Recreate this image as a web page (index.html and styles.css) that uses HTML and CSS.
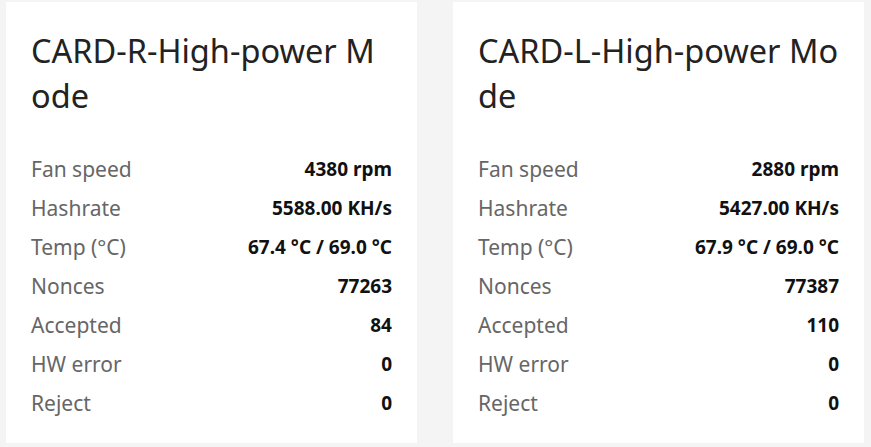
FILE: index.html
```html
<!DOCTYPE html>
<html lang="en">
<head>
    <meta charset="UTF-8">
    <title>Cards</title>
    <link rel="stylesheet" href="styles.css">
</head>
<body>
    <div class="card-row">
        <!-- Card R -->
        <div class="card">
            <div class="card-title">CARD-R-High-power Mode</div>
            <div class="stat"><span class="label">Fan speed</span><span class="value">4380 rpm</span></div>
            <div class="stat"><span class="label">Hashrate</span><span class="value">5588.00 KH/s</span></div>
            <div class="stat"><span class="label">Temp (°C)</span><span class="value">67.4 °C / 69.0 °C</span></div>
            <div class="stat"><span class="label">Nonces</span><span class="value">77263</span></div>
            <div class="stat"><span class="label">Accepted</span><span class="value">84</span></div>
            <div class="stat"><span class="label">HW error</span><span class="value">0</span></div>
            <div class="stat"><span class="label">Reject</span><span class="value">0</span></div>
        </div>

        <!-- Card L -->
        <div class="card">
            <div class="card-title">CARD-L-High-power Mode</div>
            <div class="stat"><span class="label">Fan speed</span><span class="value">2880 rpm</span></div>
            <div class="stat"><span class="label">Hashrate</span><span class="value">5427.00 KH/s</span></div>
            <div class="stat"><span class="label">Temp (°C)</span><span class="value">67.9 °C / 69.0 °C</span></div>
            <div class="stat"><span class="label">Nonces</span><span class="value">77387</span></div>
            <div class="stat"><span class="label">Accepted</span><span class="value">110</span></div>
            <div class="stat"><span class="label">HW error</span><span class="value">0</span></div>
            <div class="stat"><span class="label">Reject</span><span class="value">0</span></div>
        </div>
    </div>
</body>
</html>
```

FILE: styles.css
```css
body {
    margin: 0;
    background-color: #f4f4f4;
    font-family: "Noto Sans", "Open Sans", sans-serif;
    color: #222;
}

.card-row {
    display: flex;
    gap: 36px;
    padding: 2px 0 0 6px;
}

.card {
    width: 411px;
    height: 441px;
    box-sizing: border-box;
    background-color: #fff;
    padding: 26px 25px 0 25px;
}

/* Title breaks mid-word like the original */
.card-title {
    font-size: 32.5px;
    line-height: 45px;
    color: #222;
    word-break: break-all;
    margin-bottom: 31px;
}

.stat {
    display: flex;
    justify-content: space-between;
    align-items: center;
    height: 39px;
}

.label {
    font-size: 21px;
    color: #666;
}

.value {
    font-size: 19px;
    font-weight: bold;
    color: #111;
}
```
